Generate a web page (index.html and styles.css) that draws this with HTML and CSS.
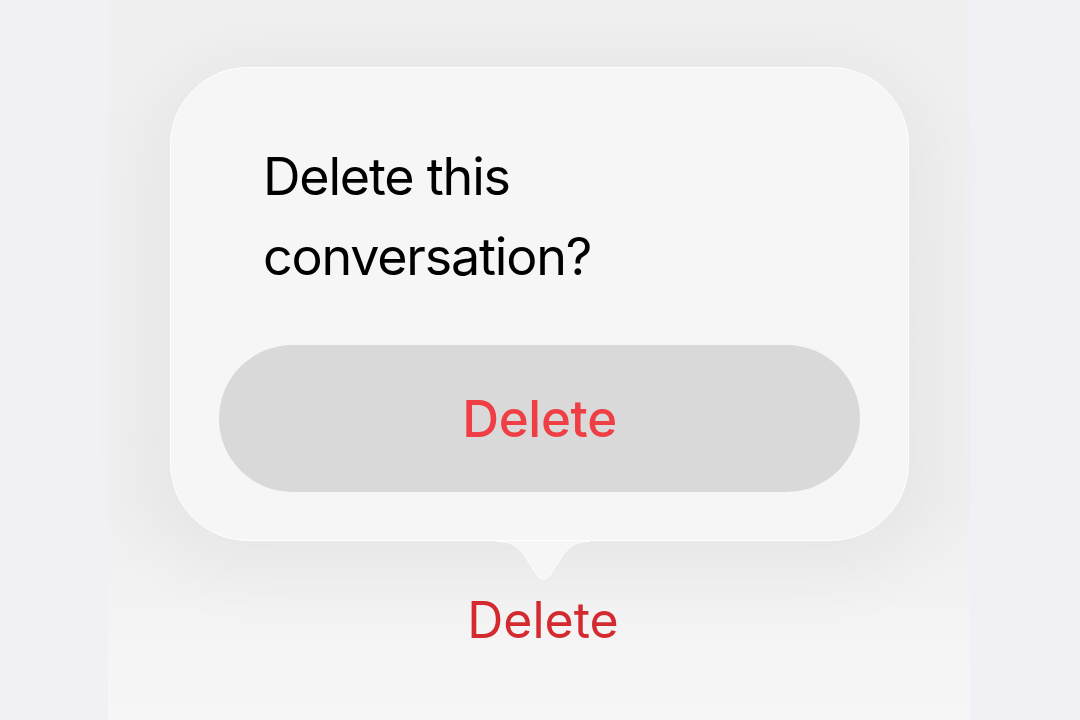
FILE: index.html
```html
<!DOCTYPE html>
<html lang="en">
<head>
<meta charset="utf-8">
<title>Delete conversation</title>
<link rel="stylesheet" href="styles.css">
</head>
<body>
  <div class="screen">
    <div class="popover">
      <p class="title">Delete this<br>conversation?</p>
      <button class="action" type="button">Delete</button>
      <svg class="tail" width="93" height="41" viewBox="0 0 93 41" aria-hidden="true">
        <path d="M0,0 C12,0 18,3 26,12 L41,35 Q46.5,41 52,35 L67,12 C75,3 81,0 93,0 Z" fill="#f6f6f6"/>
        <path d="M0,0.5 C12,0.5 18,3.5 26,12.5 L41,35.5 Q46.5,41.5 52,35.5 L67,12.5 C75,3.5 81,0.5 93,0.5" fill="none" stroke="#ffffff" stroke-width="1"/>
      </svg>
    </div>
    <div class="label">Delete</div>
  </div>
</body>
</html>
```

FILE: styles.css
```css
html, body {
  margin: 0;
  padding: 0;
}

body {
  background: #f1f1f5;
  width: 1080px;
  height: 720px;
  overflow: hidden;
  font-family: Inter, "Noto Sans", "Liberation Sans", sans-serif;
}

.screen {
  margin-left: 108px;
  width: 862px;
  height: 720px;
  background: linear-gradient(#f0f0f0 0%, #efefef 70%, #f5f5f5 92%, #f6f6f6 100%);
  display: flex;
  flex-direction: column;
  align-items: flex-start;
  box-sizing: border-box;
  padding-top: 67px;
}

.popover {
  position: relative;
  margin-left: 62px;
  width: 739px;
  height: 474px;
  box-sizing: border-box;
  border: 1px solid #ffffff;
  border-radius: 78px;
  background: #f6f6f6;
  box-shadow: 0 12px 70px 26px rgba(0, 0, 0, 0.04);
  display: flex;
  flex-direction: column;
  align-items: flex-start;
}

.title {
  margin: 69px 0 0 92px;
  font-size: 52px;
  line-height: 80px;
  font-weight: 400;
  color: #000000;
  letter-spacing: -1.2px;
}

.action {
  margin: 48px 0 0 48px;
  width: 641px;
  height: 147px;
  border: none;
  border-radius: 74px;
  background: #d9d9d9;
  color: #ef3e44;
  font-family: Inter, "Noto Sans", "Liberation Sans", sans-serif;
  font-size: 51px;
  font-weight: 500;
  letter-spacing: -0.3px;
  padding: 0;
}

.tail {
  position: absolute;
  left: 326px;
  top: 473px;
  display: block;
}

.label {
  margin: 49px 0 0 0;
  align-self: center;
  padding-left: 8px;
  font-size: 50px;
  line-height: 60px;
  color: #d42b31;
  font-weight: 400;
}
```
